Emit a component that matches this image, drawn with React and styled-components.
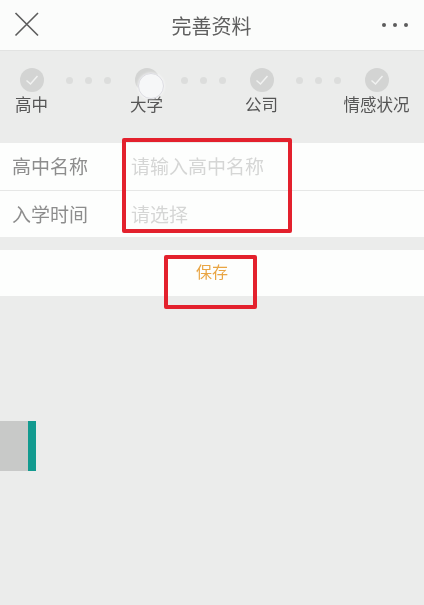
import React from 'react'
import styled, { createGlobalStyle } from 'styled-components'

const GlobalStyle = createGlobalStyle`
html, body {
  margin: 0;
  padding: 0;
  background: #ebeceb;
}
* {
  box-sizing: border-box;
}
`

const Page = styled.div`
position: relative;
width: 424px;
height: 605px;
overflow: hidden;
background: #ebeceb;
color: #666;
font-family: "Noto Sans CJK SC", "Noto Sans", sans-serif;
filter: blur(0.4px);
`

const Header = styled.header`
display: flex;
align-items: center;
justify-content: space-between;
height: 51px;
padding: 0 16px 0 13px;
background: #fbfcfb;
border-bottom: 1px solid #e2e3e2;
`

const Title = styled.h1`
margin: 0;
font-size: 20px;
font-weight: 400;
line-height: 51px;
color: #5f5f5f;
`

const CloseButton = styled.div`
display: flex;
width: 28px;
height: 28px;
`

const More = styled.div`
display: flex;
gap: 7px;
`

const MoreDot = styled.span`
width: 4px;
height: 4px;
border-radius: 50%;
background: #5c5c5c;
`

const Stepper = styled.div`
display: flex;
height: 92px;
padding-top: 17px;
`

const Step = styled.div`
position: relative;
display: flex;
flex-direction: column;
align-items: center;
width: 66px;
margin-left: ${({ $first }) => ($first ? '-1px' : '0')};
`

const StepCircle = styled.div`
display: flex;
align-items: center;
justify-content: center;
width: 24px;
height: 24px;
border-radius: 50%;
background: #d3d4d3;
`

const StepLabel = styled.span`
margin-right: 1px;
margin-top: -2px;
font-size: 16.5px;
line-height: 28px;
white-space: nowrap;
color: #555;
`

const Touch = styled.div`
position: absolute;
top: 5px;
left: 24px;
width: 26px;
height: 26px;
border-radius: 50%;
background: #f6f7f8;
border: 1px solid #dcdce2;
box-shadow: 0 0 3px rgba(255, 255, 255, 0.9);
`

const Connector = styled.div`
display: flex;
justify-content: center;
gap: 12px;
width: 49px;
height: 24px;
padding: 9px 2px 0 0;
`

const ConnectorDot = styled.span`
width: 7px;
height: 7px;
border-radius: 50%;
background: #dcdddc;
`

const Form = styled.section`
background: #fdfefd;
`

const Field = styled.div`
display: flex;
align-items: center;
height: 47px;
padding: 0 0 2px 12px;
font-size: 19px;
& + & {
  border-top: 1px solid #e6e7e6;
}
`

const FieldName = styled.span`
width: 119px;
color: #8d8d8d;
`

const Placeholder = styled.span`
color: #d5d6d5;
`

const SaveBar = styled.div`
display: flex;
justify-content: center;
height: 46px;
margin-top: 13px;
background: #fdfefd;
`

const SaveText = styled.span`
font-size: 16px;
line-height: 43px;
color: #e9a544;
`

const Outline = styled.div`
position: absolute;
top: ${({ $top }) => $top}px;
left: ${({ $left }) => $left}px;
width: ${({ $width }) => $width}px;
height: ${({ $height }) => $height}px;
border: 4px solid #e3212d;
border-radius: 2px;
`

const SideTab = styled.div`
position: absolute;
top: 421px;
left: 0;
width: 36px;
height: 50px;
background: #c8c9c8;
border-right: 8px solid #129a8f;
`

const steps = ['高中', '大学', '公司', '情感状况']

const Check = () => (
  <svg width="16" height="16" viewBox="0 0 16 16" fill="none">
    <path d="M2.5 8.5 L6.5 12 L13.5 4" stroke="#f1f2f1" strokeWidth="1.5" />
  </svg>
)

const CloseIcon = () => (
  <svg width="28" height="28" viewBox="0 0 28 28" fill="none">
    <path d="M2.5 2 L25 24.5 M25 2 L2.5 24.5" stroke="#5c5c5c" strokeWidth="1.6" />
  </svg>
)

const App = () => {
  return (
    <Page>
      <GlobalStyle />
      <Header>
        <CloseButton>
          <CloseIcon />
        </CloseButton>
        <Title>完善资料</Title>
        <More>
          <MoreDot />
          <MoreDot />
          <MoreDot />
        </More>
      </Header>

      <Stepper>
        {steps.map((name, i) => (
          <React.Fragment key={name}>
            {i > 0 && (
              <Connector>
                <ConnectorDot />
                <ConnectorDot />
                <ConnectorDot />
              </Connector>
            )}
            <Step $first={i === 0}>
              <StepCircle>{i !== 1 && <Check />}</StepCircle>
              <StepLabel>{name}</StepLabel>
              {i === 1 && <Touch />}
            </Step>
          </React.Fragment>
        ))}
      </Stepper>

      <Form>
        <Field>
          <FieldName>高中名称</FieldName>
          <Placeholder>请输入高中名称</Placeholder>
        </Field>
        <Field>
          <FieldName>入学时间</FieldName>
          <Placeholder>请选择</Placeholder>
        </Field>
      </Form>

      <SaveBar>
        <SaveText>保存</SaveText>
      </SaveBar>

      <SideTab />
      <Outline $top={138} $left={122} $width={170} $height={95} />
      <Outline $top={255} $left={164} $width={93} $height={54} />
    </Page>
  )
}

export default App
